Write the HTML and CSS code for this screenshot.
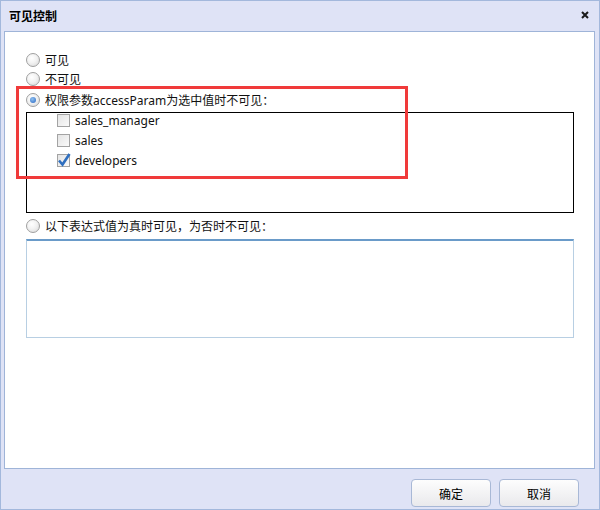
FILE: index.html
```html
<!DOCTYPE html>
<html lang="zh-CN">
<head>
  <meta charset="UTF-8" />
  <title>可见控制</title>
  <link rel="stylesheet" href="styles.css">
</head>
<body>
  <div class="dialog">
    <div class="titlebar">
      <span class="title">可见控制</span>
      <svg class="close" width="8" height="8" viewBox="0 0 8 8">
        <path d="M1 1 L7 7 M7 1 L1 7" stroke="#1a1a1a" stroke-width="2" />
      </svg>
    </div>

    <div class="content">
      <label class="option first"><span class="radio"></span>可见</label>
      <label class="option"><span class="radio"></span>不可见</label>
      <label class="option third"><span class="radio checked"></span>权限参数accessParam为选中值时不可见：</label>

      <div class="params">
        <label class="check"><span class="box"></span>sales_manager</label>
        <label class="check"><span class="box"></span>sales</label>
        <label class="check"><span class="box checked">
          <svg width="14" height="15" viewBox="0 0 14 15">
            <path d="M2 8.5 L5.5 12.5 L12.5 2" fill="none" stroke="#2f6fbf" stroke-width="2.6" />
          </svg>
        </span>developers</label>
      </div>

      <label class="option fourth"><span class="radio"></span>以下表达式值为真时可见，为否时不可见：</label>
      <div class="expr"></div>

      <!-- highlight drawn over the form -->
      <div class="mark"></div>
    </div>

    <div class="footer">
      <button class="btn">确定</button>
      <button class="btn">取消</button>
    </div>
  </div>
</body>
</html>
```

FILE: styles.css
```css
html, body {
  margin: 0;
  padding: 0;
  width: 100%;
  height: 100%;
  font-family: "Noto Sans", "Noto Sans CJK SC", sans-serif;
  font-size: 12px;
  color: #111;
}
.dialog {
  box-sizing: border-box;
  width: 600px;
  height: 510px;
  border: 1px solid #a3b8dc;
  background: #dfe3f6;
  display: flex;
  flex-direction: column;
}
.titlebar {
  height: 30px;
  display: flex;
  align-items: center;
  justify-content: space-between;
  padding: 0 10px 0 8px;
}
.title {
  font-weight: bold;
  font-size: 12px;
  color: #000;
}
.close {
  margin-top: -2px;
}
.content {
  position: relative;
  height: 438px;
  box-sizing: border-box;
  margin: 0 4px 0 3px;
  border: 1px solid #9fb4d8;
  background: #fff;
  padding: 18px 20px 0 21px;
}
.option {
  display: flex;
  align-items: center;
  height: 19px;
  gap: 5px;
}
.option.third {
  margin-top: 2px;
}
.option.fourth {
  margin-top: 3px;
}
.radio {
  width: 12px;
  height: 12px;
  border: 1px solid #a0a0a0;
  border-radius: 50%;
  background: radial-gradient(circle at 40% 35%, #fff 0%, #f2f2f2 45%, #d6d6d6 100%);
  position: relative;
}
.radio.checked::after {
  content: "";
  position: absolute;
  left: 3px;
  top: 3px;
  width: 6px;
  height: 6px;
  border-radius: 50%;
  background: radial-gradient(circle at 40% 35%, #8fc0f0, #2766c2);
}
.params {
  margin-top: 3px;
  height: 98px;
  border: 1px solid #000;
  padding: 1px 0 0 30px;
  display: flex;
  flex-direction: column;
  gap: 7px;
}
.check {
  display: flex;
  align-items: center;
  height: 13px;
  gap: 5px;
}
.box {
  width: 11px;
  height: 11px;
  border: 1px solid #a3a3a3;
  background: linear-gradient(135deg, #e4e4e4, #fafafa);
  position: relative;
}
.box svg {
  position: absolute;
  left: -1px;
  top: -3px;
}
.expr {
  margin-top: 4px;
  height: 99px;
  box-sizing: border-box;
  border: 1px solid #b8cfe3;
  border-top: 2px solid #6a9bc9;
}
.mark {
  position: absolute;
  left: 11px;
  top: 54px;
  width: 386px;
  height: 87px;
  border: 3px solid #f03a3a;
}
.footer {
  flex: 1;
  display: flex;
  justify-content: flex-end;
  align-items: flex-start;
  gap: 8px;
  padding: 10px 20px 0 0;
}
.btn {
  width: 80px;
  height: 28px;
  border: 1px solid #a8b8d6;
  border-radius: 4px;
  background: linear-gradient(#fdfdfd, #e9e9ec);
  font-family: "Noto Sans CJK SC", sans-serif;
  font-size: 12px;
  color: #000;
  padding: 0;
}
```
